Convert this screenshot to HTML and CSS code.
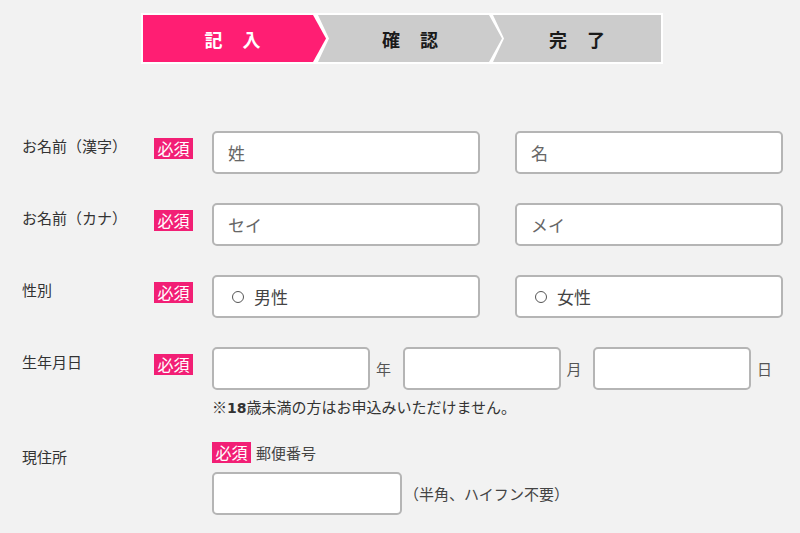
FILE: index.html
```html
<!DOCTYPE html>
<html lang="ja">
<head>
<meta charset="utf-8">
<title>お申込みフォーム</title>
<link rel="stylesheet" href="styles.css">
</head>
<body>
<div class="steps">
  <div class="step step-first is-active"><span>記入</span></div>
  <div class="step step-mid"><span>確認</span></div>
  <div class="step step-last"><span>完了</span></div>
</div>

<form class="form">
  <div class="row">
    <div class="label">お名前（漢字）</div>
    <div class="req-col"><span class="badge">必須</span></div>
    <div class="fields pair">
      <input class="field wide" type="text" placeholder="姓">
      <input class="field wide" type="text" placeholder="名">
    </div>
  </div>

  <div class="row">
    <div class="label">お名前（カナ）</div>
    <div class="req-col"><span class="badge">必須</span></div>
    <div class="fields pair">
      <input class="field wide" type="text" placeholder="セイ">
      <input class="field wide" type="text" placeholder="メイ">
    </div>
  </div>

  <div class="row">
    <div class="label">性別</div>
    <div class="req-col"><span class="badge">必須</span></div>
    <div class="fields pair">
      <label class="field wide radio"><span class="circle"></span>男性</label>
      <label class="field wide radio"><span class="circle"></span>女性</label>
    </div>
  </div>

  <div class="row row-birth">
    <div class="label">生年月日</div>
    <div class="req-col"><span class="badge">必須</span></div>
    <div class="fields">
      <div class="date-line">
        <input class="field date" type="text"><span class="unit">年</span>
        <input class="field date" type="text"><span class="unit">月</span>
        <input class="field date" type="text"><span class="unit">日</span>
      </div>
      <p class="note">※<span class="num">18</span>歳未満の方はお申込みいただけません。</p>
    </div>
  </div>

  <div class="row row-address">
    <div class="label">現住所</div>
    <div class="req-col"></div>
    <div class="fields">
      <div class="sub-head"><span class="badge">必須</span><span class="sub-label">郵便番号</span></div>
      <div class="zip-line">
        <input class="field zip" type="text">
        <span class="hint">（半角、ハイフン不要）</span>
      </div>
    </div>
  </div>
</form>
</body>
</html>
```

FILE: styles.css
```css
html, body {
  margin: 0;
  padding: 0;
  background: #f2f2f2;
}

body {
  font-family: "Noto Sans CJK JP", "Noto Sans", sans-serif;
  color: #333;
  width: 800px;
  height: 533px;
  overflow: hidden;
}

/* ---------- step bar ---------- */
.steps {
  display: flex;
  width: 518px;
  height: 47px;
  padding: 2px;
  margin: 13px 0 0 141px;
  background: #ffffff;
}

.step {
  flex: none;
  height: 47px;
  display: flex;
  align-items: center;
  justify-content: center;
  background: #cccccc;
  color: #1a1a1a;
  font-size: 18px;
  font-weight: 700;
}

.step span {
  letter-spacing: 20px;
  text-indent: 20px;
  display: block;
  text-align: center;
  width: 100%;
}

.step.is-active {
  background: #ff1e73;
  color: #ffffff;
}

.step-first {
  width: 183px;
  clip-path: polygon(0 0, calc(100% - 13px) 0, 100% 50%, calc(100% - 13px) 100%, 0 100%);
}

.step-first span { padding-right: 4px; }

.step-mid {
  width: 184px;
  margin-left: -8px;
  clip-path: polygon(0 0, calc(100% - 13px) 0, 100% 50%, calc(100% - 13px) 100%, 0 100%, 11px 50%);
}

.step-last {
  width: 168px;
  margin-left: -9px;
  clip-path: polygon(0 0, 100% 0, 100% 100%, 0 100%, 11px 50%);
}

/* ---------- form ---------- */
.form {
  margin-top: 67px;
  padding-left: 22px;
}

.row {
  display: grid;
  grid-template-columns: 132px 58px auto;
  align-items: start;
  margin-bottom: 29px;
}

.label {
  padding-top: 4px;
  font-size: 15px;
  line-height: 22px;
  color: #333;
}

.badge {
  display: inline-block;
  width: 39px;
  height: 21px;
  line-height: 21px;
  text-align: center;
  background: #f21f75;
  color: #ffffff;
  font-size: 16px;
}

.req-col .badge {
  margin-top: 7px;
}

.fields.pair {
  display: flex;
  gap: 35px;
}

.field {
  box-sizing: border-box;
  height: 43px;
  border: 2px solid #b5b5b5;
  border-radius: 5px;
  background: #ffffff;
  font-family: "Noto Sans CJK JP", "Noto Sans", sans-serif;
  font-size: 17px;
  color: #555;
  padding: 0 14px;
  margin: 0;
  outline: none;
}

.field::placeholder {
  color: #666;
  opacity: 1;
}

.field.wide { width: 268px; }

.radio {
  display: flex;
  align-items: center;
  padding-left: 18px;
  color: #444;
}

.circle {
  box-sizing: border-box;
  width: 12px;
  height: 12px;
  border: 1.5px solid #555;
  border-radius: 50%;
  margin-right: 10px;
}

/* birth date */
.row-birth { margin-bottom: 23px; }

.date-line {
  display: flex;
  align-items: center;
}

.field.date { width: 158px; }

.unit {
  font-size: 15px;
  color: #555;
  margin-left: 6px;
  margin-right: 11.5px;
}

.note {
  margin: 6px 0 0;
  font-size: 15px;
  line-height: 22px;
  color: #333;
}

.note .num {
  font-weight: 700;
  font-family: "DejaVu Sans", sans-serif;
  font-size: 14px;
}

/* address */
.sub-head {
  display: flex;
  align-items: center;
  height: 21px;
}

.sub-label {
  margin-left: 5px;
  font-size: 15px;
  color: #444;
}

.zip-line {
  display: flex;
  align-items: center;
  margin-top: 9px;
}

.field.zip { width: 190px; }

.hint {
  margin-left: 2px;
  font-size: 15px;
  color: #444;
}
```
